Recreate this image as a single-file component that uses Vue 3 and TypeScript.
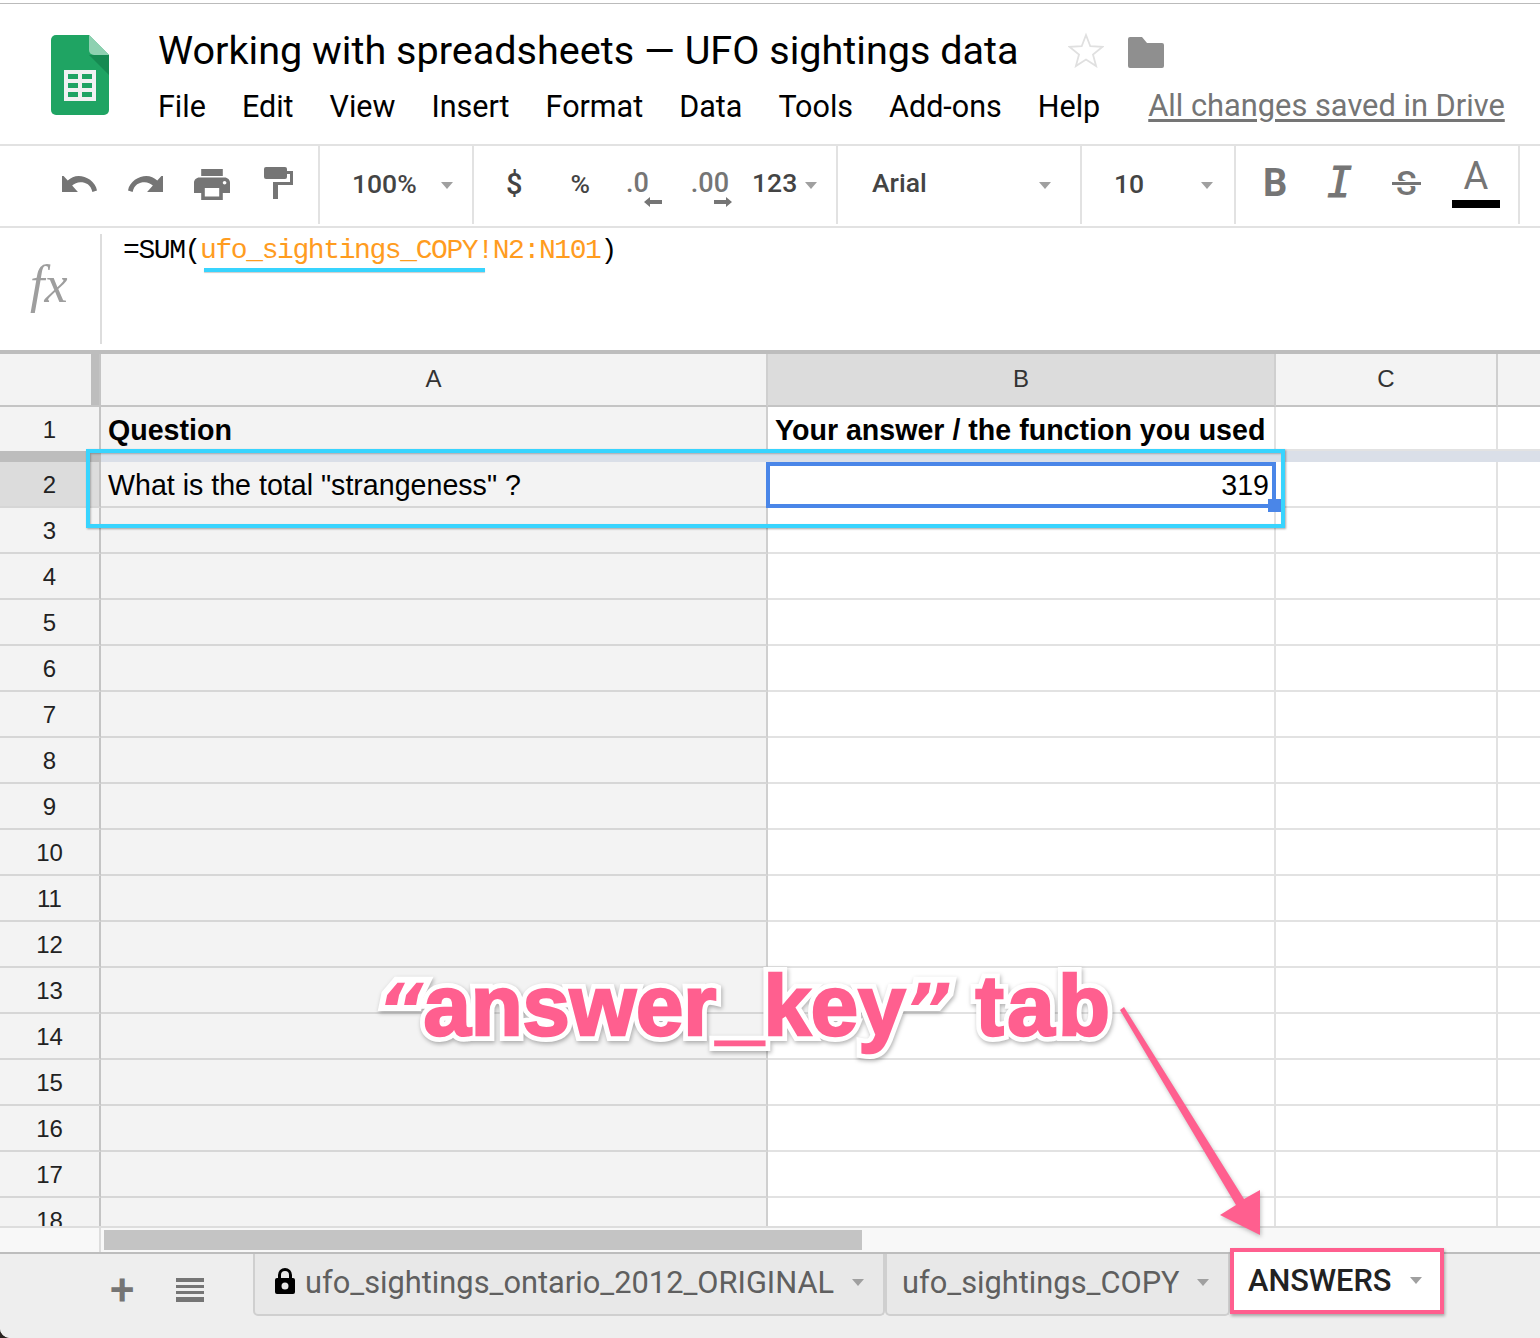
<script setup lang="ts">
const bodyRows: number[] = []
for (let n = 3; n <= 18; n++) bodyRows.push(n)

const menus = ['File', 'Edit', 'View', 'Insert', 'Format', 'Data', 'Tools', 'Add-ons', 'Help']
</script>

<template>
  <div class="page">
    <header class="title-bar">
      <svg class="logo" viewBox="0 0 58 80">
        <path d="M5 0h33l20 20v55a5 5 0 0 1-5 5H5a5 5 0 0 1-5-5V5a5 5 0 0 1 5-5z" fill="#1fa463" />
        <path d="M38 20l20 20V20z" fill="#168a52" />
        <path d="M38 0l20 20H43a5 5 0 0 1-5-5z" fill="#8ed1b1" />
        <path d="M13 35h32v31H13z" fill="#f1f1f1" />
        <path d="M17 39h10v5H17zM31 39h10v5H31zM17 48h10v5H17zM31 48h10v5H31zM17 57h10v5H17zM31 57h10v5H31z" fill="#1fa463" />
      </svg>
      <div class="title-main">
        <div class="title-line">
          <h1 class="doc-title">Working with spreadsheets — UFO sightings data</h1>
          <svg class="star" viewBox="0 0 36 36">
            <path d="M18 3l4.3 11.2 12 .7-9.3 7.6 3.1 11.6L18 27.6 7.900 34.100 11 22.500 1.700 14.900l12-.7z" fill="none" stroke="#e0e0e0" stroke-width="1.800" />
          </svg>
          <svg class="folder" viewBox="0 0 36 31">
            <path d="M2 0h12l5 6h15a2 2 0 0 1 2 2v21a2 2 0 0 1-2 2H2a2 2 0 0 1-2-2V2a2 2 0 0 1 2-2z" fill="#8f8f8f" />
          </svg>
        </div>
        <div class="menu-line">
          <nav class="menu">
            <span v-for="m in menus" :key="m">{{ m }}</span>
          </nav>
          <span class="saved">All changes saved in Drive</span>
        </div>
      </div>
    </header>

    <div class="toolbar">
      <div class="tool-group group-history">
        <svg class="ic-undo" viewBox="2 8 22 9" preserveAspectRatio="none"><path d="M12.500 8c-2.650 0-5.050.99-6.900 2.600L2 7v10h10l-3.620-3.620c1.390-1.160 3.160-1.880 5.120-1.880 3.540 0 6.550 1.310 7.600 5.500l2.900-.78C23.080 11.030 17.150 8 12.500 8z" fill="#757575" /></svg>
        <svg class="ic-redo" viewBox="0 8 22 9" preserveAspectRatio="none"><path d="M11.500 8c2.650 0 5.050.99 6.900 2.600L22 7v10H12l3.620-3.620C14.230 12.220 12.460 11.500 10.500 11.500c-3.540 0-6.550 1.310-7.600 5.500L0 16.220C.92 11.030 6.850 8 11.500 8z" fill="#757575" /></svg>
        <svg class="ic-print" viewBox="2 3 20 18" preserveAspectRatio="none"><path d="M19 8H5c-1.660 0-3 1.340-3 3v6h4v4h12v-4h4v-6c0-1.660-1.340-3-3-3zm-3 11H8v-5h8v5zm3-7c-.55 0-1-.45-1-1s.45-1 1-1 1 .45 1 1-.45 1-1 1zm-1-9H6v4h12V3z" fill="#757575" /></svg>
        <svg class="ic-roller" viewBox="0 0 29 32"><path d="M2 0h19a2 2 0 0 1 2 2v8a2 2 0 0 1-2 2H2a2 2 0 0 1-2-2V2a2 2 0 0 1 2-2z" fill="#757575" /><path d="M23 4h6v14H14v14H9V15h17V7h-3z" fill="#757575" /></svg>
      </div>
      <div class="tool-group group-zoom">
        <span class="tool-text">100%</span>
        <i class="caret"></i>
      </div>
      <div class="tool-group group-format">
        <span class="tool-text strong dollar">$</span>
        <span class="tool-text strong percent">%</span>
        <span class="decimal dec-less">.0<svg viewBox="0 0 18 10"><path d="M0 5l6-5v3h12v4H6v3z" fill="#757575" /></svg></span>
        <span class="decimal dec-more">.00<svg viewBox="0 0 18 10"><path d="M18 5l-6-5v3H0v4h12v3z" fill="#757575" /></svg></span>
        <span class="tool-text num-format">123</span>
        <i class="caret"></i>
      </div>
      <div class="tool-group group-font">
        <span class="tool-text">Arial</span>
        <i class="caret"></i>
      </div>
      <div class="tool-group group-size">
        <span class="tool-text">10</span>
        <i class="caret"></i>
      </div>
      <div class="tool-group group-style">
        <span class="fmt fmt-b">B</span>
        <span class="fmt fmt-i">I</span>
        <span class="fmt fmt-s">S<i></i></span>
        <span class="fmt-a">A<i></i></span>
      </div>
    </div>

    <div class="formula-bar">
      <div class="fx-box"><span class="fx">fx</span></div>
      <div class="formula">=SUM(<span class="ref">ufo_sightings_COPY!N2:N101</span>)</div>
    </div>

    <div class="sheet">
      <div class="corner"><i></i></div>
      <div class="col-head">A</div>
      <div class="col-head picked">B</div>
      <div class="col-head">C</div>
      <div class="col-head last"></div>

      <div class="row-head row-first">1</div>
      <div class="cell shade bold">Question</div>
      <div class="cell bold">Your answer / the function you used</div>
      <div class="cell"></div>
      <div class="cell last"></div>

      <div class="freeze-head"></div>
      <div class="freeze-bar"></div>

      <div class="row-head picked">2</div>
      <div class="cell shade">What is the total "strangeness" ?</div>
      <div class="cell number">319</div>
      <div class="cell"></div>
      <div class="cell last"></div>

      <template v-for="n in bodyRows" :key="n">
        <div class="row-head">{{ n }}</div>
        <div class="cell shade"></div>
        <div class="cell"></div>
        <div class="cell"></div>
        <div class="cell last"></div>
      </template>
    </div>

    <div class="scroll-row">
      <div class="scroll-gutter"></div>
      <div class="scroll-thumb"></div>
    </div>

    <footer class="tab-bar">
      <span class="add-sheet">+</span>
      <svg class="all-sheets" viewBox="0 0 28 24"><path d="M0 0h28v4H0zM0 7h28v3H0zM0 13h28v3H0zM0 19h28v5H0z" fill="#757575" /></svg>
      <div class="tab tab-original">
        <svg class="lock" viewBox="0 0 20 26"><path d="M10 0a7 7 0 0 0-7 7v3H2a2 2 0 0 0-2 2v12a2 2 0 0 0 2 2h16a2 2 0 0 0 2-2V12a2 2 0 0 0-2-2h-1V7a7 7 0 0 0-7-7zm0 3a4 4 0 0 1 4 4v3H6V7a4 4 0 0 1 4-4zm0 11.500a3.500 3.500 0 1 1 0 7 3.500 3.500 0 0 1 0-7z" fill="#000" fill-rule="evenodd" /></svg>
        <span>ufo_sightings_ontario_2012_ORIGINAL</span>
        <i class="caret"></i>
      </div>
      <div class="tab tab-copy">
        <span>ufo_sightings_COPY</span>
        <i class="caret"></i>
      </div>
      <div class="tab-active">
        <span>ANSWERS</span>
        <i class="caret"></i>
      </div>
    </footer>

    <!-- annotations drawn over the sheet -->
    <div class="formula-mark"></div>
    <div class="row-box"></div>
    <div class="cell-select"><i></i></div>
    <div class="callout"><span class="quote">“</span><span class="fat" data-t="answer_key">answer_key</span><span class="quote">”</span> <span class="fat tab-word" data-t="tab">tab</span></div>
    <svg class="callout-arrow" viewBox="0 0 1540 1338">
      <path d="M1120 1010l4-3 120 192 16-9v45l-40-20 16-10z" fill="#ff5f8f" />
    </svg>
  </div>
</template>

<style>
body {
  background: #2a2320;
}
</style>

<style scoped>
.page {
  position: relative;
  width: 1540px;
  height: 1338px;
  overflow: hidden;
  display: flex;
  flex-direction: column;
  background: #fff;
  border-radius: 0 0 0 10px;
  font-family: Roboto, "Liberation Sans", sans-serif;
  color: #000;
}

/* Title */
.title-bar {
  margin-top: 3px;
  border-top: 1px solid #bbb;
  border-bottom: 2px solid #e2e2e2;
  box-sizing: content-box;
  height: 140px;
  display: flex;
}
.logo {
  width: 58px;
  height: 80px;
  margin: 31px 0 0 51px;
}
.title-main {
  margin-left: 49px;
  flex: 1;
}
.title-line {
  display: flex;
  align-items: center;
  height: 46px;
  margin-top: 24px;
}
.doc-title {
  margin: 0;
  font-size: 39.6px;
  font-weight: 400;
  line-height: 46px;
  white-space: nowrap;
}
.star {
  width: 36px;
  height: 36px;
  margin: -2px 0 0 49px;
}
.folder {
  width: 36px;
  height: 31px;
  margin: 2px 0 0 24px;
}
.menu-line {
  display: flex;
  align-items: flex-start;
  margin-top: 15px;
}
.menu {
  display: flex;
  gap: 36px;
  font-size: 30.5px;
  line-height: 36px;
}
.saved {
  margin: -1px 0 0 48px;
  font-size: 30.8px;
  line-height: 36px;
  color: #757575;
  text-decoration: underline;
  text-underline-offset: 3px;
}

/* Toolbar */
.toolbar {
  height: 80px;
  border-bottom: 2px solid #e2e2e2;
  display: flex;
}
.tool-group {
  position: relative;
  box-sizing: border-box;
  height: 78px;
  border-right: 2px solid #e2e2e2;
  display: flex;
  align-items: center;
  flex: none;
}
.group-history {
  width: 320px;
  padding-left: 62px;
}
.ic-undo {
  width: 35px;
  height: 16px;
  margin-top: -2px;
}
.ic-redo {
  width: 35px;
  height: 16px;
  margin: -2px 0 0 31px;
}
.ic-print {
  width: 36px;
  height: 31px;
  margin: -2px 0 0 31px;
}
.ic-roller {
  width: 29px;
  height: 32px;
  margin: -4px 0 0 34px;
}
.tool-text {
  font-size: 26.5px;
  font-weight: 500;
  color: #444;
  line-height: 32px;
}
.group-zoom .tool-text,
.group-size .tool-text {
  margin-top: -2px;
}
.caret {
  display: block;
  flex: none;
  width: 0;
  height: 0;
  border-left: 6.500px solid transparent;
  border-right: 6.500px solid transparent;
  border-top: 7px solid #a0a0a0;
}
.group-zoom {
  width: 154px;
  padding-left: 32px;
}
.group-zoom .caret {
  margin-left: 24px;
}
.group-format {
  width: 364px;
  padding-left: 32px;
}
.dollar {
  margin-top: -2px;
  font-size: 29px;
}
.percent {
  margin: -2px 0 0 48px;
}
.num-format {
  margin: -4px 0 0 23px;
}
.group-format .caret {
  margin-left: 8px;
}
.decimal {
  position: relative;
  font-size: 27px;
  font-weight: 500;
  color: #757575;
  line-height: 32px;
  margin-top: -4px;
}
.decimal svg {
  position: absolute;
  width: 18px;
  height: 10px;
  top: 30px;
  right: -13px;
}
.dec-less {
  margin-left: 36px;
}
.dec-more {
  margin-left: 42px;
}
.dec-more svg {
  right: -3px;
}
.group-font {
  width: 244px;
  padding-left: 34px;
}
.group-font .tool-text {
  margin-top: -4px;
}
.group-font .caret {
  margin-left: 112px;
}
.group-size {
  width: 154px;
  padding-left: 32px;
}
.group-size .caret {
  margin-left: 57px;
}
.group-style {
  width: 284px;
}
.fmt {
  position: absolute;
  color: #757575;
  line-height: 40px;
  top: 17px;
  font-size: 38px;
}
.fmt-b {
  left: 27px;
  font-weight: 700;
}
.fmt-i {
  left: 91px;
  font-family: "DejaVu Sans Mono", monospace;
  font-style: italic;
  font-size: 42px;
  font-weight: 400;
  -webkit-text-stroke: 1px #757575;
}
.fmt-s {
  left: 160px;
  font-size: 34px;
  font-weight: 500;
}
.fmt-s i {
  position: absolute;
  left: -4px;
  right: -4px;
  top: 19px;
  height: 3px;
  background: #757575;
  box-shadow: 0 0 0 1px #fff;
}
.fmt-a {
  position: absolute;
  left: 216px;
  top: 10px;
  width: 48px;
  text-align: center;
  font-size: 38px;
  line-height: 40px;
  color: #757575;
}
.fmt-a i {
  display: block;
  height: 8px;
  margin-top: 4px;
  background: #000;
}

/* Formula */
.formula-bar {
  height: 122px;
  display: flex;
}
.fx-box {
  box-sizing: border-box;
  width: 102px;
  height: 110px;
  margin-top: 6px;
  border-right: 2px solid #ddd;
  display: flex;
  align-items: center;
  padding: 0 0 10px 30px;
}
.fx {
  font-family: "Liberation Serif", serif;
  font-style: italic;
  font-size: 52px;
  color: #9e9e9e;
}
.formula {
  margin-left: 21px;
  margin-top: 5px;
  font-family: "Liberation Mono", monospace;
  font-size: 28px;
  letter-spacing: -1.4px;
  line-height: 36px;
  white-space: nowrap;
}
.ref {
  color: #ff9c1f;
}

/* Sheet */
.sheet {
  height: 872px;
  border-top: 4px solid #bdbdbd;
  overflow: hidden;
  display: grid;
  grid-template-columns: 101px 667px 508px 222px 1fr;
  grid-template-rows: 53px 44px 11px 46px;
  grid-auto-rows: 46px;
  font-family: "Liberation Sans", Arial, sans-serif;
}
.sheet > div {
  box-sizing: border-box;
}
.corner {
  background: #f3f3f3;
  border-right: 2px solid #c4c4c4;
  border-bottom: 2px solid #c4c4c4;
  display: flex;
  justify-content: flex-end;
}
.corner i {
  width: 8px;
  background: #bdbdbd;
}
.col-head {
  background: #f3f3f3;
  border-right: 2px solid #cfcfcf;
  border-bottom: 2px solid #c4c4c4;
  display: flex;
  align-items: center;
  justify-content: center;
  padding-bottom: 2px;
  font-size: 24px;
  color: #333;
}
.col-head.picked {
  background: #dcdcdc;
}
.col-head.last {
  border-right: 0;
}
.row-head {
  background: #f3f3f3;
  border-right: 2px solid #c4c4c4;
  border-bottom: 2px solid #d6d6d6;
  display: flex;
  align-items: center;
  justify-content: center;
  padding-top: 2px;
  font-size: 24px;
  color: #222;
}
.row-head.picked {
  background: #dcdcdc;
}
.row-first {
  border-bottom: 0;
}
.cell {
  border-right: 2px solid #e2e2e2;
  border-bottom: 2px solid #e2e2e2;
  display: flex;
  align-items: center;
  padding: 2px 5px 0 7px;
  font-size: 28.6px;
  white-space: nowrap;
}
.cell.last {
  border-right: 0;
}
.shade {
  background: #f3f3f3;
  border-right-color: #cfcfcf;
  border-bottom-color: #d6d6d6;
}
.bold {
  font-weight: 700;
  border-bottom: 0;
}
.number {
  justify-content: flex-end;
}
.freeze-head {
  background: #bdbdbd;
}
.freeze-bar {
  grid-column: 2 / -1;
  background: #dadfe8;
}

/* Scrollbar */
.scroll-row {
  box-sizing: border-box;
  height: 26px;
  border-top: 2px solid #ddd;
  background: #f8f8f8;
  display: flex;
}
.scroll-gutter {
  width: 99px;
  border-right: 2px solid #ddd;
}
.scroll-thumb {
  width: 758px;
  height: 20px;
  margin: 2px 0 0 3px;
  background: #c4c4c4;
}

/* Tabs */
.tab-bar {
  position: relative;
  flex: 1;
  border-top: 2px solid #bdbdbd;
  background: #eee;
  display: flex;
  align-items: flex-start;
}
.add-sheet {
  width: 24px;
  margin: 14px 0 0 110px;
  font-size: 44px;
  line-height: 44px;
  text-align: center;
  font-weight: 500;
  color: #757575;
}
.all-sheets {
  width: 28px;
  height: 24px;
  margin: 24px 0 0 42px;
}
.tab {
  box-sizing: border-box;
  height: 62px;
  background: #e8e8e8;
  border: 2px solid #cfcfcf;
  border-top: 0;
  border-radius: 0 0 5px 5px;
  display: flex;
  align-items: center;
  font-size: 30.8px;
  color: #5f5f5f;
  padding-bottom: 3px;
}
.tab-original {
  width: 632px;
  margin-left: 49px;
  padding-left: 20px;
}
.lock {
  width: 20px;
  height: 26px;
  margin: -4px 10px 0 0;
}
.tab-original .caret {
  margin-left: 18px;
}
.tab-copy {
  width: 345px;
  padding-left: 15px;
}
.tab-copy .caret {
  margin-left: 17px;
}
.tab-active {
  position: absolute;
  left: 1230px;
  top: -6px;
  box-sizing: border-box;
  width: 214px;
  height: 66px;
  background: #fff;
  border: 4px solid #ff5f8f;
  box-shadow: 1px 2px 3px rgba(0, 0, 0, 0.3);
  display: flex;
  align-items: center;
  padding: 0 0 2px 14px;
  font-size: 30.8px;
  font-weight: 500;
  color: #222;
}
.tab-active .caret {
  margin-left: 19px;
}

/* Annotations */
.formula-mark {
  position: absolute;
  left: 204px;
  top: 268px;
  width: 281px;
  height: 4px;
  background: #38d4fe;
  box-shadow: 0 1px 1px rgba(0, 0, 0, 0.2);
}
.row-box {
  position: absolute;
  left: 86px;
  top: 449px;
  box-sizing: border-box;
  width: 1199px;
  height: 79px;
  border: 4px solid #38d4fe;
  box-shadow: 1px 1px 2px rgba(0, 0, 0, 0.35), inset 1px 1px 2px rgba(0, 0, 0, 0.25);
}
.cell-select {
  position: absolute;
  left: 766px;
  top: 462px;
  box-sizing: border-box;
  width: 510px;
  height: 46px;
  border: 4px solid #4a86e8;
}
.cell-select i {
  position: absolute;
  right: -9px;
  bottom: -8px;
  width: 13px;
  height: 13px;
  background: #4a86e8;
}
.callout {
  position: absolute;
  left: 377px;
  top: 958px;
  font-family: "Liberation Sans", Arial, sans-serif;
  font-size: 85px;
  font-weight: 700;
  line-height: 96px;
  color: #ff5f8f;
  white-space: nowrap;
  -webkit-text-stroke: 12px #fff;
  paint-order: stroke fill;
  filter: drop-shadow(1px 2px 2px rgba(0, 0, 0, 0.3));
}
.quote {
  font-family: "DejaVu Sans", sans-serif;
  font-style: italic;
  font-size: 72px;
}
.fat {
  position: relative;
}
.tab-word {
  letter-spacing: 3.5px;
}
.fat::after {
  content: attr(data-t);
  position: absolute;
  left: 0;
  top: 0;
  -webkit-text-stroke: 2.5px #ff5f8f;
}
.callout-arrow {
  position: absolute;
  left: 0;
  top: 0;
  width: 1540px;
  height: 1338px;
  pointer-events: none;
  filter: drop-shadow(1px 2px 2px rgba(0, 0, 0, 0.25));
}
</style>
